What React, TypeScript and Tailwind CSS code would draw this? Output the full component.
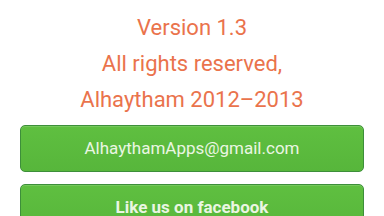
export default function App() {
  return (
    <div className="w-[384px] h-[216px] overflow-hidden bg-white font-['Roboto',sans-serif]">
      <div className="pt-[10px] flex flex-col items-center text-[22px] leading-[36px] text-[#ea734c]">
        <p>Version 1.3</p>
        <p>All rights reserved,</p>
        <p>Alhaytham 2012–2013</p>
      </div>
      <div className="mt-[7px] px-[20px] flex flex-col gap-[12px]">
        <button className="h-[47px] w-full rounded-[5px] border border-[#3d8f3a] bg-gradient-to-b from-[#5fbf40] to-[#57b63b] text-[17px] text-[#eaf6e2] shadow-[inset_0_1px_0_rgba(255,255,255,0.15)]">
          AlhaythamApps@gmail.com
        </button>
        <button className="h-[47px] w-full rounded-[5px] border border-[#3d8f3a] bg-gradient-to-b from-[#5fbf40] to-[#57b63b] text-[17px] font-bold text-[#eaf6e2] shadow-[inset_0_1px_0_rgba(255,255,255,0.15)]">
          Like us on facebook
        </button>
      </div>
    </div>
  );
}
